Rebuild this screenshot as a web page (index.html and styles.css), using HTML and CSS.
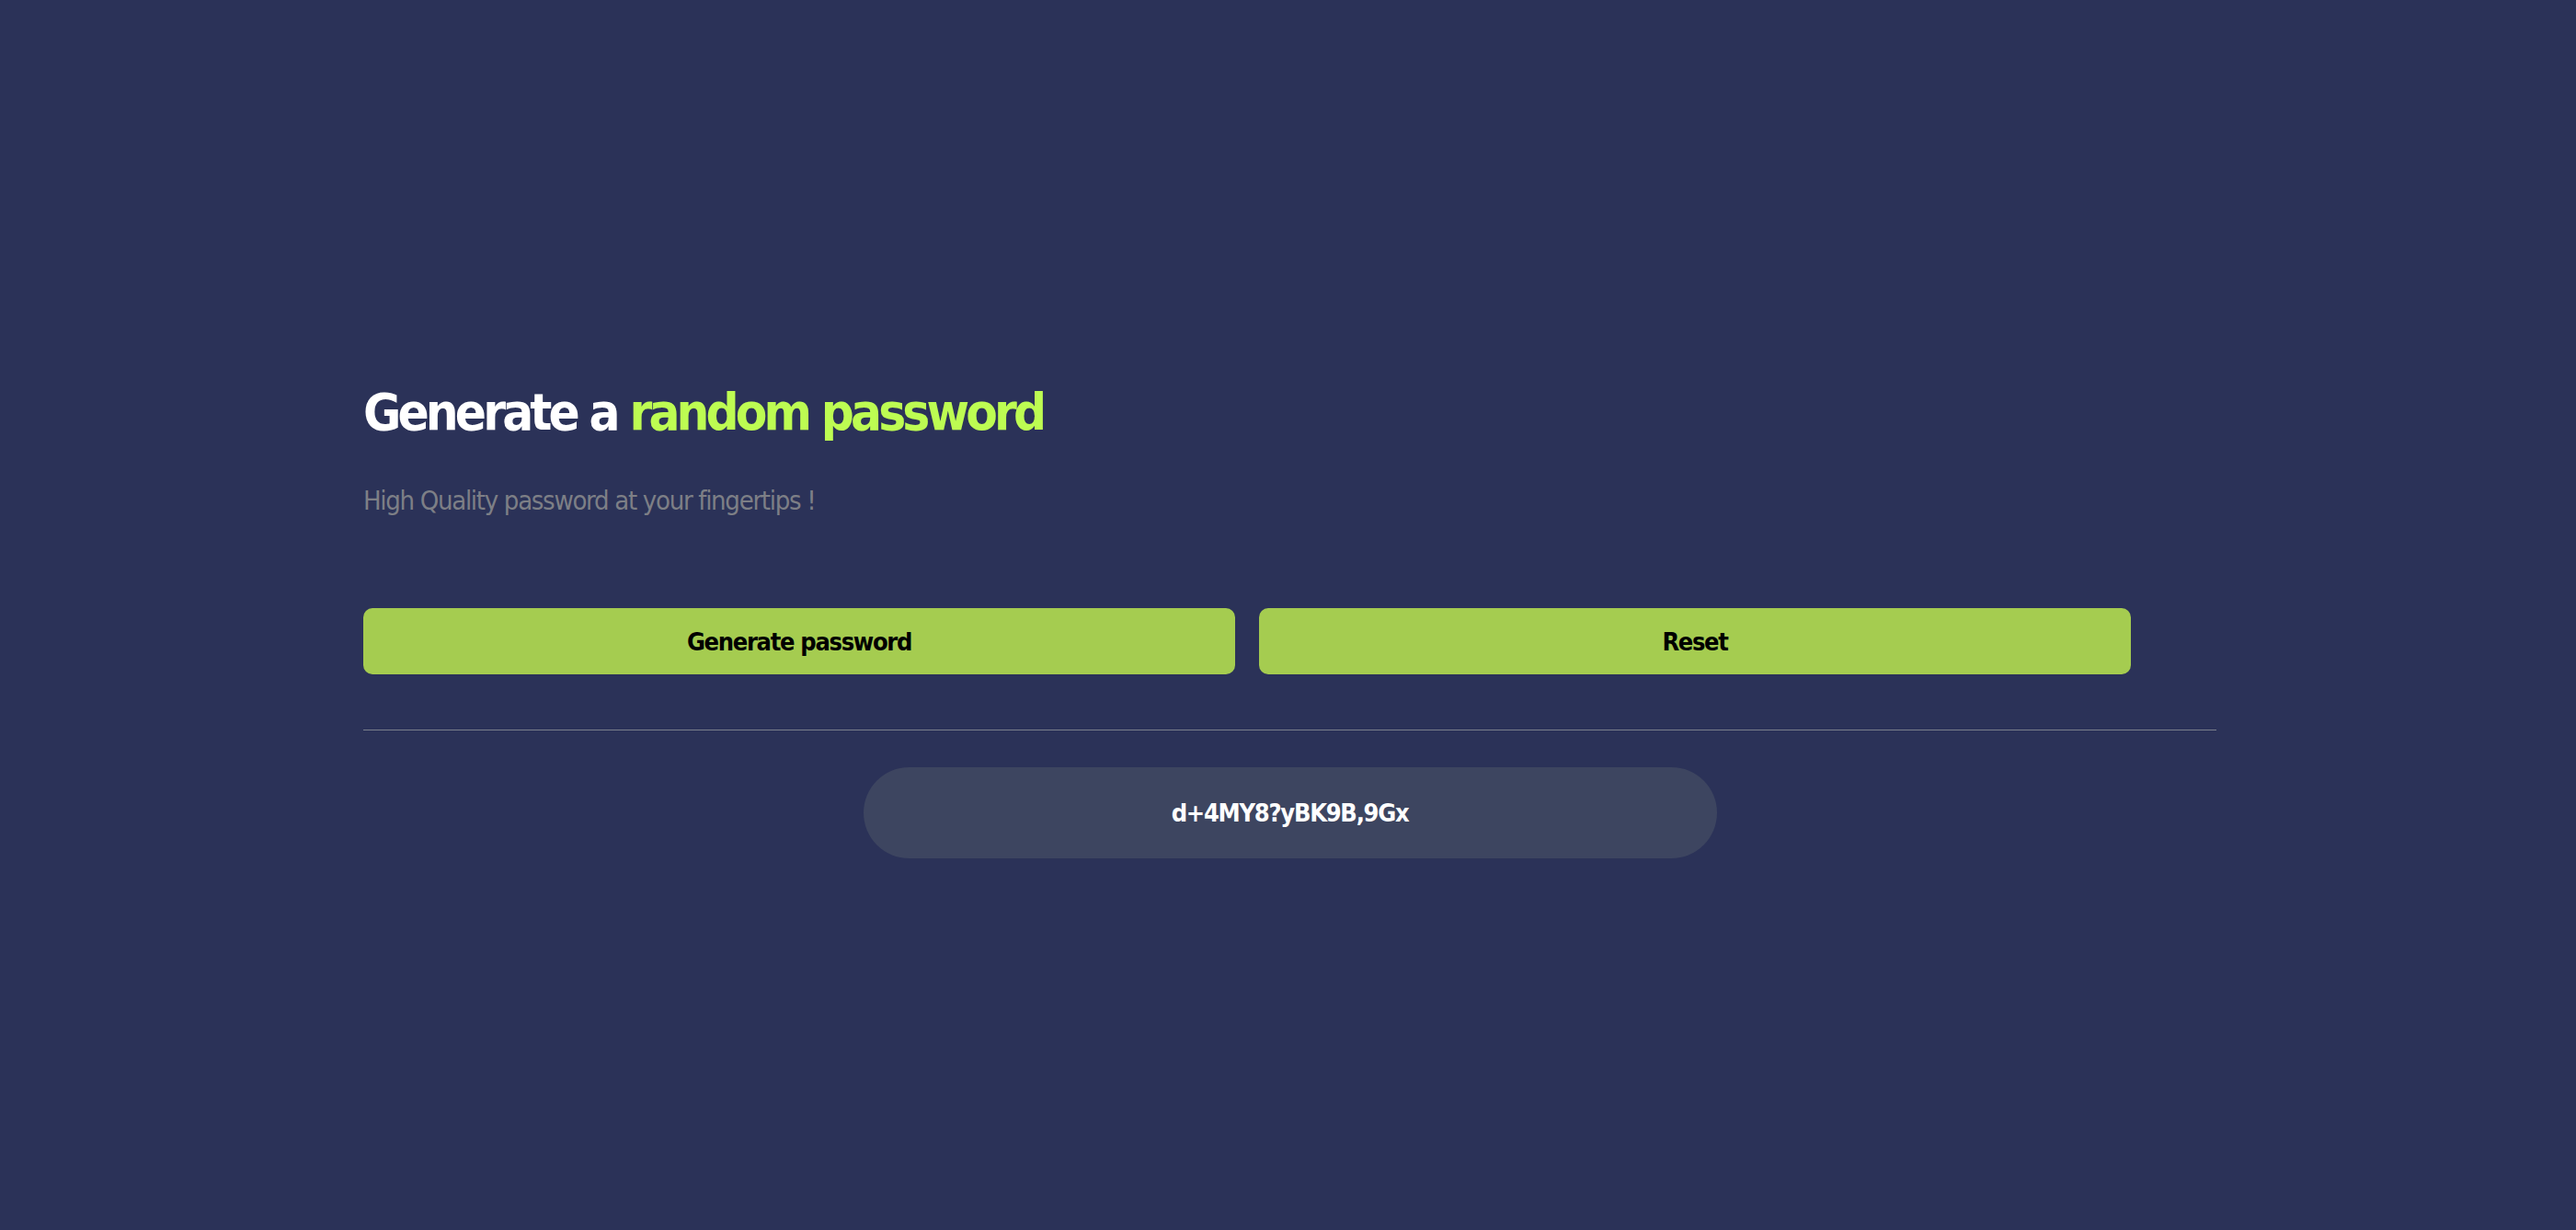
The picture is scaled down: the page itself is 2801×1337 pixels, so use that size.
FILE: index.html
```html
<!DOCTYPE html>
<html lang="en">
<head>
<meta charset="utf-8">
<title>Password Generator</title>
<link rel="stylesheet" href="styles.css">
</head>
<body>
<main class="container">
  <h1 class="title">Generate a <span class="accent">random password</span></h1>
  <p class="subtitle">High Quality password at your fingertips !</p>
  <div class="actions">
    <button class="btn">Generate password</button>
    <button class="btn">Reset</button>
  </div>
  <hr class="divider">
  <div class="result">
    <div class="pill">d+4MY8?yBK9B,9Gx</div>
  </div>
</main>
</body>
</html>
```
FILE: styles.css
```css
html, body {
  margin: 0;
  padding: 0;
}
body {
  background: #2b3258;
  font-family: "DejaVu Sans Condensed", "DejaVu Sans", sans-serif;
  font-stretch: condensed;
  min-height: 1337px;
}
.container {
  width: 2015px;
  margin: 0 391px 0 395px;
  padding-top: 416px;
  display: flex;
  flex-direction: column;
}
.title {
  margin: 0;
  font-size: 56px;
  line-height: 63px;
  font-weight: 700;
  letter-spacing: -3.85px;
  color: #ffffff;
}
.accent {
  color: #bdfc52;
}
.subtitle {
  margin: 49px 0 0;
  font-size: 29px;
  line-height: 33px;
  font-weight: 400;
  letter-spacing: -1.3px;
  color: #7d7f86;
}
.actions {
  margin-top: 100px;
  display: flex;
  gap: 26px;
}
.btn {
  width: 948px;
  height: 72px;
  border: none;
  border-radius: 10px;
  background: #a5cc50;
  color: #000000;
  font-family: inherit;
  font-stretch: condensed;
  font-size: 27px;
  font-weight: 700;
  letter-spacing: -1.3px;
  padding: 0;
}
.divider {
  margin: 60px 0 0;
  border: none;
  height: 1px;
  background: #7a7f8c;
}
.result {
  margin-top: 40px;
  display: flex;
  justify-content: center;
}
.pill {
  width: 928px;
  height: 99px;
  border-radius: 50px;
  background: #3d4560;
  color: #ffffff;
  font-size: 27px;
  font-weight: 700;
  letter-spacing: -1.25px;
  display: flex;
  align-items: center;
  justify-content: center;
}
```
